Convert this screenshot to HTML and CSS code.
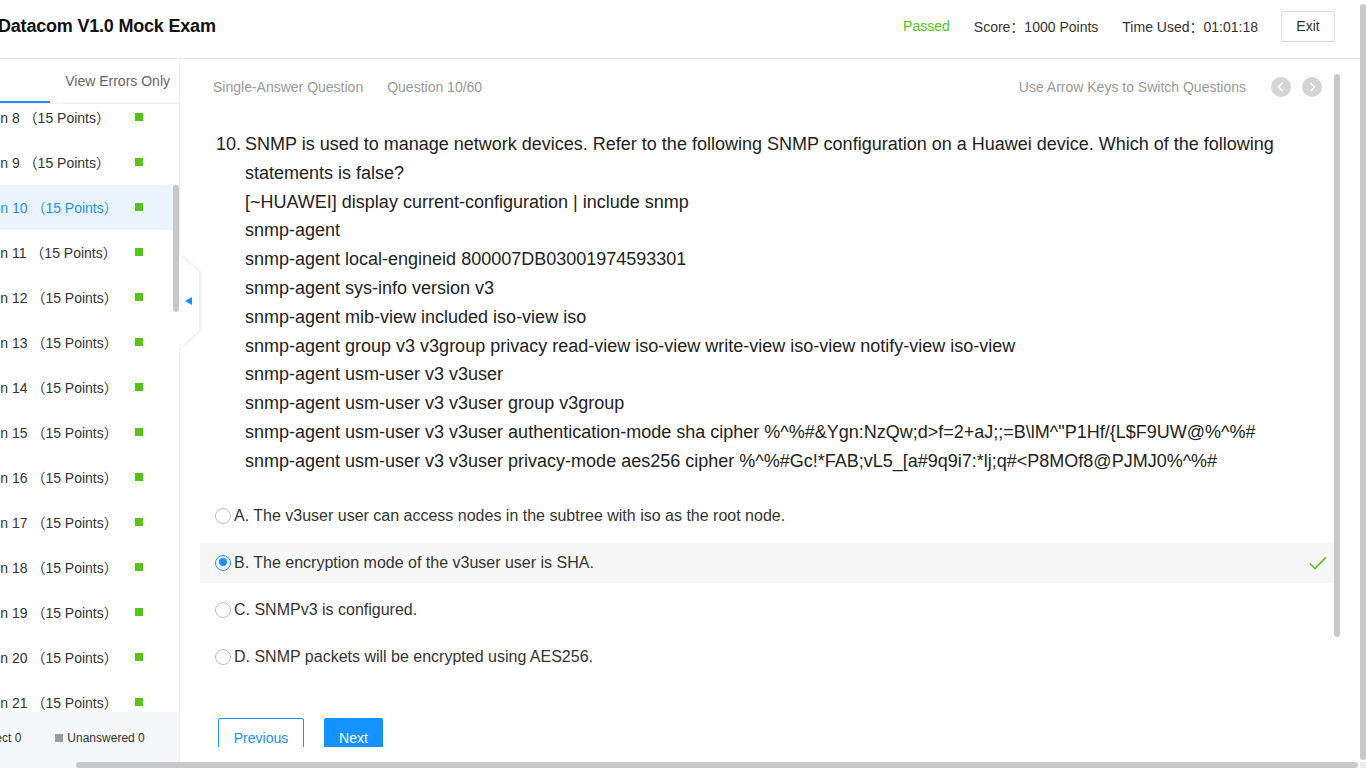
FILE: index.html
```html
<!DOCTYPE html>
<html lang="en">
<head>
<meta charset="utf-8">
<title>Datacom V1.0 Mock Exam</title>
<link rel="stylesheet" href="styles.css">
</head>
<body>
<div class="app">
  <header class="topbar">
    <h1 class="title">Datacom V1.0 Mock Exam</h1>
    <div class="status">
      <span class="passed">Passed</span>
      <span>Score：1000 Points</span>
      <span>Time Used：01:01:18</span>
      <button class="exit">Exit</button>
    </div>
  </header>
  <div class="body">
    <aside class="sidebar">
      <div class="side-inner">
        <div class="tabs">
          <div class="tab active">All</div>
          <div class="tab errors">View Errors Only</div>
        </div>
        <div class="list">
          <div class="list-track">
            <div class="item"><span>Question 8 （15 Points）</span><i class="sq"></i></div>
            <div class="item"><span>Question 9 （15 Points）</span><i class="sq"></i></div>
            <div class="item current"><span>Question 10 （15 Points）</span><i class="sq"></i></div>
            <div class="item"><span>Question 11 （15 Points）</span><i class="sq"></i></div>
            <div class="item"><span>Question 12 （15 Points）</span><i class="sq"></i></div>
            <div class="item"><span>Question 13 （15 Points）</span><i class="sq"></i></div>
            <div class="item"><span>Question 14 （15 Points）</span><i class="sq"></i></div>
            <div class="item"><span>Question 15 （15 Points）</span><i class="sq"></i></div>
            <div class="item"><span>Question 16 （15 Points）</span><i class="sq"></i></div>
            <div class="item"><span>Question 17 （15 Points）</span><i class="sq"></i></div>
            <div class="item"><span>Question 18 （15 Points）</span><i class="sq"></i></div>
            <div class="item"><span>Question 19 （15 Points）</span><i class="sq"></i></div>
            <div class="item"><span>Question 20 （15 Points）</span><i class="sq"></i></div>
            <div class="item"><span>Question 21 （15 Points）</span><i class="sq"></i></div>
          </div>
        </div>
        <div class="legend">
          <div class="legend-track">
            <span class="lg"><i class="sq"></i>Correct 0</span>
            <span class="lg"><i class="sq gray"></i>Unanswered 0</span>
          </div>
        </div>
      </div>
      <div class="side-thumb"></div>
      <div class="collapse">
        <svg width="26" height="100" viewBox="0 0 26 100">
          <defs>
            <filter id="sh" x="-50%" y="-20%" width="200%" height="140%">
              <feDropShadow dx="1" dy="0" stdDeviation="2" flood-color="#000" flood-opacity="0.12"/>
            </filter>
          </defs>
          <path d="M0 1 L20 18 L20 76 L0 94 Z" fill="#fff" filter="url(#sh)"/>
          <path d="M6 47 L13 43 L13 51 Z" fill="#1890ff"/>
        </svg>
      </div>
    </aside>
    <main class="main">
      <div class="qhead">
        <span>Single-Answer Question</span>
        <span class="qno">Question 10/60</span>
        <span class="hint">Use Arrow Keys to Switch Questions</span>
        <span class="circ"><svg width="20" height="20" viewBox="0 0 20 20"><path d="M11.5 6 L7.5 10 L11.5 14" fill="none" stroke="#fff" stroke-width="1.5"/></svg></span>
        <span class="circ"><svg width="20" height="20" viewBox="0 0 20 20"><path d="M8.5 6 L12.5 10 L8.5 14" fill="none" stroke="#fff" stroke-width="1.5"/></svg></span>
      </div>
      <div class="question">
        <span class="num">10.</span>
        <div class="qtext">SNMP is used to manage network devices. Refer to the following SNMP configuration on a Huawei device. Which of the following statements is false?<br>[~HUAWEI] display current-configuration | include snmp<br>snmp-agent<br>snmp-agent local-engineid 800007DB03001974593301<br>snmp-agent sys-info version v3<br>snmp-agent mib-view included iso-view iso<br>snmp-agent group v3 v3group privacy read-view iso-view write-view iso-view notify-view iso-view<br>snmp-agent usm-user v3 v3user<br>snmp-agent usm-user v3 v3user group v3group<br>snmp-agent usm-user v3 v3user authentication-mode sha cipher %^%#&amp;Ygn:NzQw;d&gt;f=2+aJ;;=B\lM^"P1Hf/{L$F9UW@%^%#<br>snmp-agent usm-user v3 v3user privacy-mode aes256 cipher %^%#Gc!*FAB;vL5_[a#9q9i7:*lj;q#&lt;P8MOf8@PJMJ0%^%#</div>
      </div>
      <div class="options">
        <div class="option"><i class="radio"></i><span>A. The v3user user can access nodes in the subtree with iso as the root node.</span></div>
        <div class="option chosen"><i class="radio on"></i><span>B. The encryption mode of the v3user user is SHA.</span>
          <svg class="check" width="18" height="16" viewBox="0 0 18 16"><path d="M1 8.5 L6 13.5 L17 2" fill="none" stroke="#52c41a" stroke-width="1.6"/></svg>
        </div>
        <div class="option"><i class="radio"></i><span>C. SNMPv3 is configured.</span></div>
        <div class="option"><i class="radio"></i><span>D. SNMP packets will be encrypted using AES256.</span></div>
      </div>
      <div class="actions">
        <button class="btn prev">Previous</button>
        <button class="btn next">Next</button>
      </div>
      <div class="main-thumb"></div>
    </main>
  </div>
  <div class="page-vbar"></div>
  <div class="page-hbar"></div>
  <div class="page-corner"></div>
</div>
</body>
</html>
```
FILE: styles.css
```css
* { box-sizing: border-box; }
html, body { margin: 0; padding: 0; }
body {
  font-family: "Liberation Sans", Arial, "Noto Sans CJK SC", sans-serif;
  color: #333;
  background: #fff;
  overflow: hidden;
}
.app { width: 1360px; height: 768px; position: relative; }

.topbar {
  height: 59px;
  border-bottom: 1px solid #e8e8e8;
  display: flex;
  align-items: center;
  padding: 0 25px 6px 0;
}
.title {
  margin: 0 0 0 -2px;
  font-size: 18px;
  font-weight: bold;
  color: #111;
  letter-spacing: -0.2px;
}
.status {
  margin-left: auto;
  display: flex;
  align-items: center;
  gap: 24px;
  font-size: 14px;
  color: #333;
}
.passed { color: #52c41a; }
.exit {
  width: 54px;
  height: 31px;
  border: 1px solid #d9d9d9;
  border-radius: 2px;
  background: #fff;
  font: inherit;
  color: #333;
  margin-left: -1px;
}

.body { display: flex; height: 709px; }

.sidebar {
  width: 180px;
  flex: 0 0 180px;
  position: relative;
  border-right: 1px solid #eee;
}
.side-inner {
  height: 100%;
  overflow: hidden;
  display: flex;
  flex-direction: column;
}
.tabs {
  height: 45px;
  flex: 0 0 45px;
  border-bottom: 1px solid #eee;
  display: flex;
  margin-left: -80px;
  width: 260px;
  font-size: 14px;
}
.tab { height: 44px; display: flex; align-items: center; }
.tab.active {
  width: 130px;
  justify-content: center;
  color: #1890ff;
  box-shadow: inset 0 -2px 0 #1890ff;
}
.tab.errors {
  flex: 1;
  justify-content: flex-end;
  padding-right: 10px;
  color: #666;
}
.list { flex: 1; overflow: hidden; }
.list-track { margin: -9px 0 0 -80px; width: 260px; }
.item {
  height: 45px;
  display: flex;
  align-items: center;
  justify-content: space-between;
  padding: 0 37px 2px 32px;
  font-size: 14px;
  color: #333;
  white-space: nowrap;
}
.item.current { background: #ecf5ff; color: #1890ff; }
.sq { display: inline-block; width: 8px; height: 8px; background: #52c41a; }
.sq.gray { background: #9b9b9b; }
.legend {
  height: 56px;
  flex: 0 0 56px;
  background: #f6f7f9;
  display: flex;
  align-items: center;
  padding-bottom: 4px;
  font-size: 12px;
  color: #333;
}
.legend-track { display: flex; gap: 34px; margin-left: -40px; white-space: nowrap; }
.lg { display: flex; align-items: center; gap: 4px; }

.side-thumb {
  position: absolute;
  left: 173px;
  top: 126px;
  width: 6px;
  height: 127px;
  border-radius: 3px;
  background: #c8c8c8;
}
.collapse {
  position: absolute;
  left: 179px;
  top: 195px;
  width: 26px;
  height: 100px;
  z-index: 2;
}
.collapse svg { display: block; }

.main {
  width: 1160px;
  height: 688px;
  overflow: hidden;
  position: relative;
  padding: 0 6px 0 20px;
}
.qhead {
  height: 56px;
  display: flex;
  align-items: center;
  padding: 0 12px 0 13px;
  font-size: 14px;
  color: #999;
}
.qno { margin-left: 24px; }
.hint { margin-left: auto; margin-right: 25px; }
.circ {
  width: 20px;
  height: 20px;
  border-radius: 50%;
  background: #d4d4d4;
  display: flex;
}
.circ + .circ { margin-left: 11px; }
.question {
  margin-top: 15px;
  display: flex;
  padding: 0 16px;
  font-size: 18px;
  line-height: 28.8px;
  color: #222;
}
.num { flex: 0 0 29px; }
.qtext { flex: 1; }
.options {
  margin-top: 20px;
  display: flex;
  flex-direction: column;
  gap: 7px;
}
.option {
  height: 40px;
  display: flex;
  align-items: center;
  padding: 0 7px 0 15px;
  font-size: 16px;
  color: #333;
}
.option.chosen { background: #f7f7f7; }
.radio {
  width: 16px;
  height: 16px;
  border-radius: 50%;
  border: 1px solid #bfbfbf;
  background: #fff;
  margin-right: 3px;
  flex: 0 0 16px;
  position: relative;
}
.radio.on { border: 1.5px solid #1890ff; }
.radio.on::after {
  content: "";
  position: absolute;
  left: 2.5px;
  top: 2.5px;
  width: 8px;
  height: 8px;
  border-radius: 50%;
  background: #1890ff;
}
.check { margin-left: auto; }
.actions {
  margin-top: 41px;
  display: flex;
  gap: 20px;
  padding-left: 18px;
}
.btn {
  height: 40px;
  border-radius: 2px;
  font: inherit;
  font-size: 14px;
  padding: 0;
}
.prev { width: 86px; border: 1px solid #1890ff; background: #fff; color: #1890ff; }
.next { width: 59px; border: 1px solid #1492ff; background: #1492ff; color: #fff; }
.main-thumb {
  position: absolute;
  right: 0;
  top: 15px;
  width: 6px;
  height: 563px;
  border-radius: 3px;
  background: #c8c8c8;
}

.page-vbar {
  position: fixed;
  left: 1360px;
  top: 4px;
  width: 6px;
  height: 756px;
  border-radius: 3px;
  background: #c8c8c8;
}
.page-hbar {
  position: fixed;
  left: 76px;
  top: 762px;
  width: 1282px;
  height: 6px;
  border-radius: 3px;
  background: #c8c8c8;
}
.page-corner {
  position: fixed;
  left: 1360px;
  top: 762px;
  width: 6px;
  height: 6px;
  background: #eee;
}
```
